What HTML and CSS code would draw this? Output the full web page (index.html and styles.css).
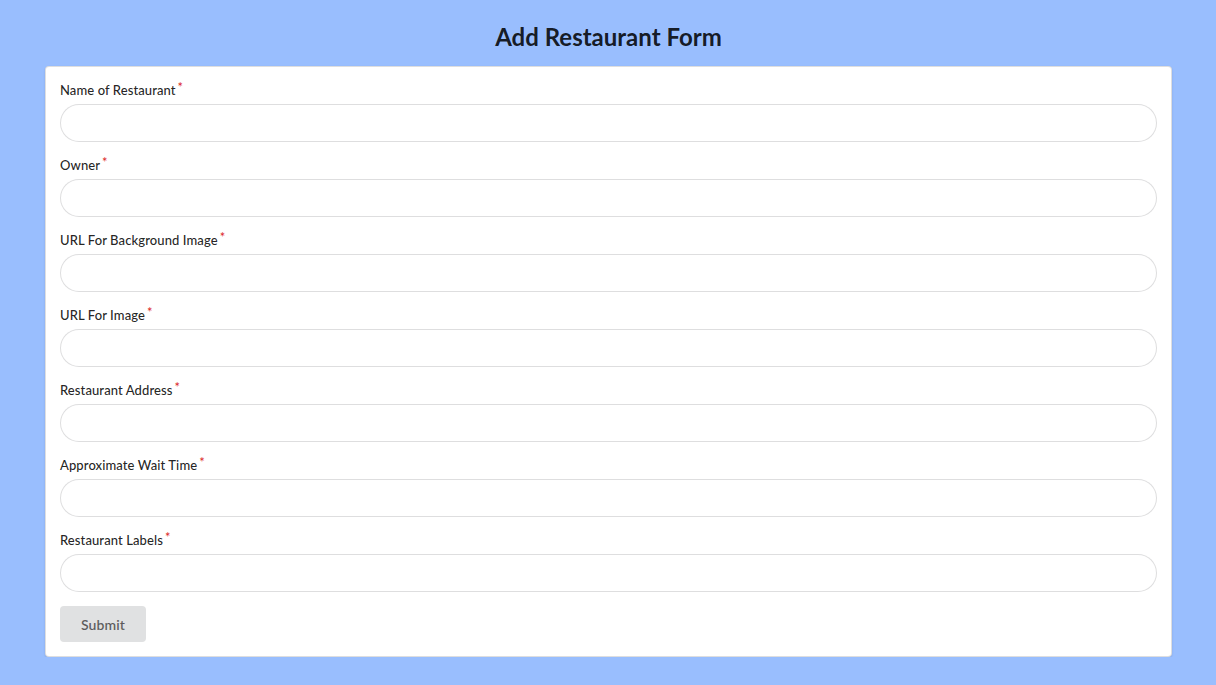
FILE: index.html
```html
<!DOCTYPE html>
<html>
<head>
<meta charset="utf-8">
<link rel="stylesheet" href="styles.css">
</head>
<body>
<div class="page">
  <h2 class="title">Add Restaurant Form</h2>
  <form class="card">
    <div class="field"><label class="req">Name of Restaurant</label><input type="text"></div>
    <div class="field"><label class="req">Owner</label><input type="text"></div>
    <div class="field"><label class="req">URL For Background Image</label><input type="text"></div>
    <div class="field"><label class="req">URL For Image</label><input type="text"></div>
    <div class="field"><label class="req">Restaurant Address</label><input type="text"></div>
    <div class="field"><label class="req">Approximate Wait Time</label><input type="text"></div>
    <div class="field"><label class="req">Restaurant Labels</label><input type="text"></div>
    <button type="button" class="submit">Submit</button>
  </form>
</div>
</body>
</html>
```
FILE: styles.css
```css
html, body {
  margin: 0;
  padding: 0;
  background: #99befe;
  font-family: Lato, "Helvetica Neue", Arial, sans-serif;
  font-size: 14px;
  color: rgba(0,0,0,.87);
}
.page {
  padding: 21px 44px 0 45px;
}
.title {
  margin: 0 0 14px;
  text-align: center;
  font-size: 24px;
  line-height: 31px;
  font-weight: 700;
  color: rgba(0,0,0,.87);
}
.card {
  display: flex;
  flex-direction: column;
  background: #fff;
  border: 1px solid rgba(34,36,38,.15);
  border-radius: 4px;
  box-shadow: 0 1px 2px 0 rgba(34,36,38,.15);
  padding: 14px;
}
.field {
  display: flex;
  flex-direction: column;
  margin-bottom: 14px;
}
.field label {
  font-size: 13px;
  line-height: 19px;
  font-weight: 500;
  letter-spacing: 0.1px;
  margin-bottom: 4px;
  color: rgba(0,0,0,.87);
}
.req::after {
  content: '*';
  color: #db2828;
  margin: -0.2em 0 0 0.15em;
  display: inline-block;
  vertical-align: top;
  font-weight: 400;
}
.field input {
  box-sizing: border-box;
  height: 38px;
  width: 100%;
  border: 1px solid rgba(34,36,38,.15);
  border-radius: 500px;
  padding: 9.5px 14px;
  font-family: inherit;
  font-size: 14px;
  outline: none;
  background: #fff;
}
.submit {
  align-self: flex-start;
  height: 36px;
  padding: 0 21px;
  border: none;
  border-radius: 4px;
  background: #e0e1e2;
  color: rgba(0,0,0,.6);
  font-family: inherit;
  font-size: 14px;
  font-weight: 600;
  letter-spacing: 0.1px;
}
```
